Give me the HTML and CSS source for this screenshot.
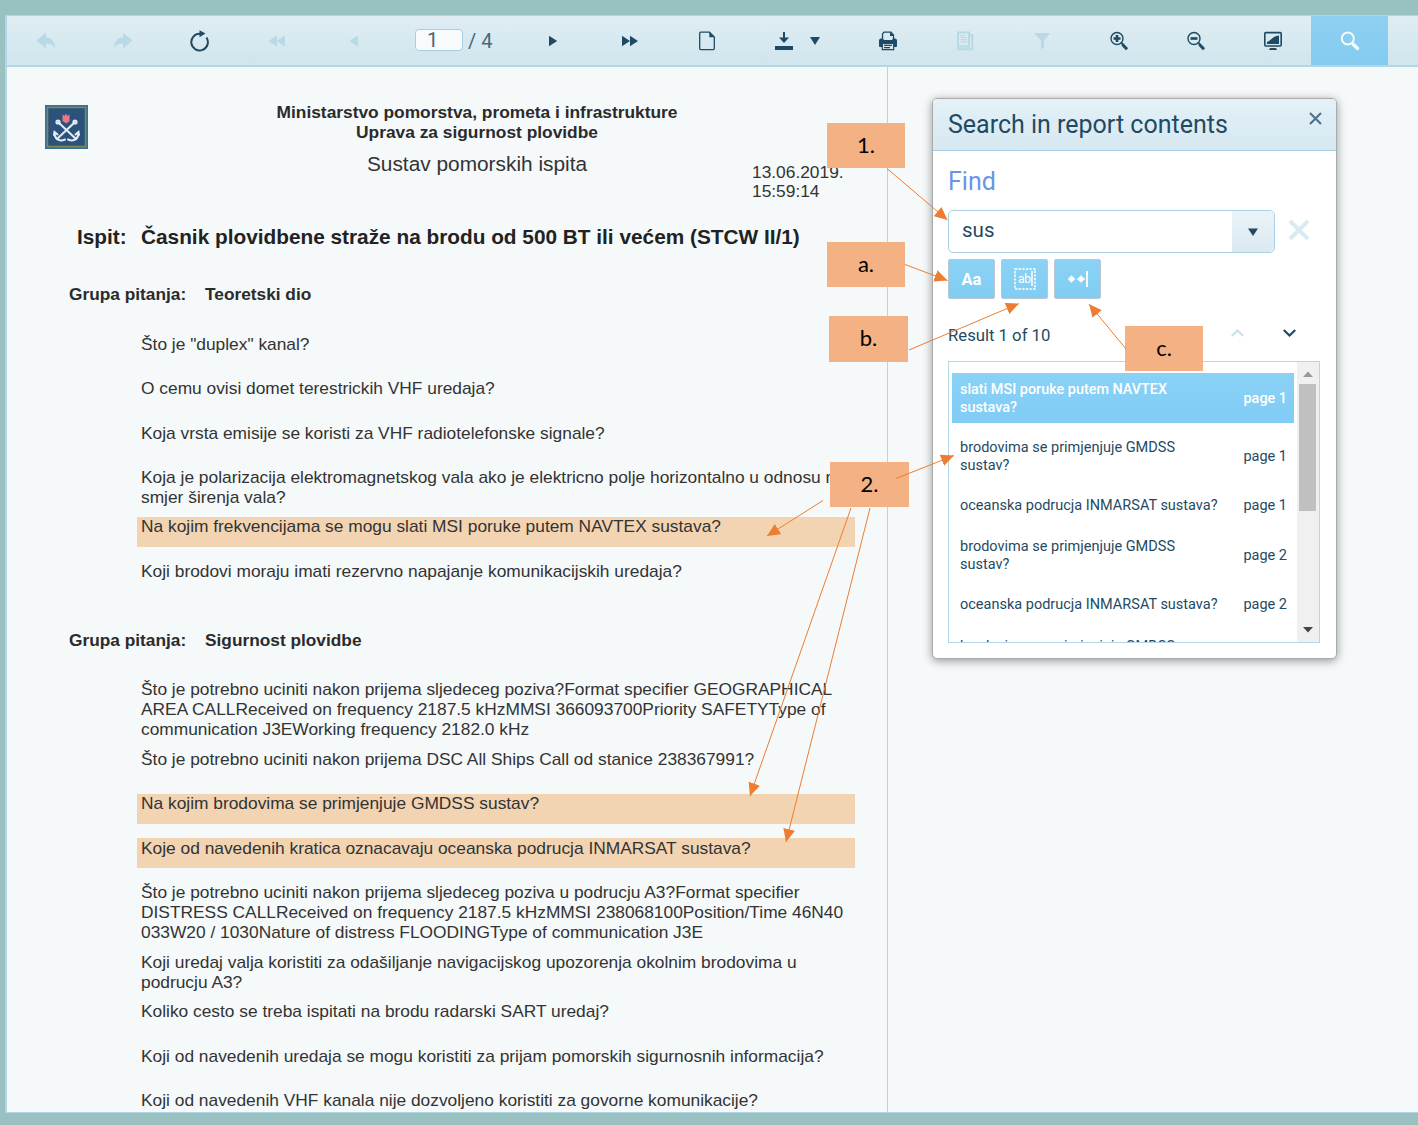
FILE: index.html
```html
<!DOCTYPE html>
<html lang="hr">
<head>
<meta charset="utf-8">
<title>Report viewer</title>
<link rel="stylesheet" href="styles.css">
</head>
<body>
<div class="viewer">
  <header class="toolbar">
    <span class="tool off"><svg width="20" height="18" viewBox="0 0 20 18"><path d="M.5 8.500 10 .5V5.300C15 5.500 18.500 9 19.300 16C17.500 13 14.500 11.500 10 11.700V16.500Z"/></svg></span>
    <span class="tool off"><svg width="20" height="18" viewBox="0 0 20 18"><path d="M19.500 8.500 10 .5V5.300C5 5.500 1.500 9 .7 16C2.500 13 5.500 11.500 10 11.700V16.500Z"/></svg></span>
    <span class="tool"><svg width="20" height="22" viewBox="0 0 20 22"><path class="line" stroke-width="2" d="M16.500 7.500A8.300 8.300 0 1 1 10 3.800"/><path d="M9.500 0.300 15.500 3.500 9.500 7.300Z"/></svg></span>
    <span class="tool off"><svg width="18" height="12" viewBox="0 0 18 12"><path d="M.5 6 9 .5V11.500ZM8.500 6 17 .5V11.500Z"/></svg></span>
    <span class="tool off"><svg width="10" height="12" viewBox="0 0 10 12"><path d="M.5 6 9 .5V11.500Z"/></svg></span>
    <span class="pager"><span class="page-input">1</span><span class="page-total">/ 4</span></span>
    <span class="tool"><svg width="10" height="12" viewBox="0 0 10 12"><path d="M9.200 6 1 .7V11.300Z"/></svg></span>
    <span class="tool"><svg width="18" height="12" viewBox="0 0 18 12"><path d="M9 6 1 .7V11.300ZM17 6 9 .7V11.300Z"/></svg></span>
    <span class="tool"><svg width="18" height="20" viewBox="0 0 18 20"><path class="line" stroke-width="1.300" d="M2.700 1.200H11.500L16.300 6V17.500Q16.300 18.600 15.300 18.600H2.700Q1.700 18.600 1.700 17.500V2.200Q1.700 1.200 2.700 1.200Z"/><path d="M11.300 1V6.200H16.500Z"/></svg></span>
    <span class="tool download"><svg width="20" height="20" viewBox="0 0 20 20"><path d="M9 1H11V6.500H15L10 12 5 6.500H9ZM1 15H19V19H1Z"/></svg><svg width="10" height="8" viewBox="0 0 10 8"><path d="M0 0H10L5 8Z"/></svg></span>
    <span class="tool"><svg width="20" height="20" viewBox="0 0 20 20"><path class="line" stroke-width="1.300" d="M4.500 8V3L6 1.200H13L15.500 4V8"/><path d="M12 1V5H16ZM3 7.500H5L6 9H14L15 7.500H17Q19 7.500 19 9.500V15Q19 16 18 16H2Q1 16 1 15V9.500Q1 7.500 3 7.500Z"/><path class="paper" d="M4.300 12.300H15.700V18.700H4.300Z"/><path class="line" stroke-width="1.200" d="M4.300 12.300H15.700V18.700H4.300ZM6 14.400H14M6 16.600H12"/></svg></span>
    <span class="tool off"><svg width="18" height="20" viewBox="0 0 18 20"><path class="line" stroke-width="2" d="M2 1.500H13V15.500H2ZM14 4H16.300V18.300H2V1.500"/><path class="line" stroke-width="1.100" d="M4.500 4.500H9M4.500 6.500H11M4.500 8.600H11M4.500 10.700H11"/></svg></span>
    <span class="tool off"><svg width="18" height="18" viewBox="0 0 18 18"><path d="M.8 1H17.200L11 8.500V15.500L8 17.500V8.500Z"/></svg></span>
    <span class="tool"><svg width="20" height="20" viewBox="0 0 20 20"><circle class="line" stroke-width="1.400" cx="8" cy="7.500" r="6"/><path class="line" stroke-width="2.600" d="M8 4V11M4.500 7.500H11.500"/><path class="line" stroke-width="2" d="M12 11.500 14 13.500"/><path class="line" stroke-width="3" d="M13.500 13.500 18 18.300"/></svg></span>
    <span class="tool"><svg width="20" height="20" viewBox="0 0 20 20"><circle class="line" stroke-width="1.400" cx="8" cy="7.500" r="6"/><path class="line" stroke-width="2.600" d="M4.500 7.500H11.500"/><path class="line" stroke-width="2" d="M12 11.500 14 13.500"/><path class="line" stroke-width="3" d="M13.500 13.500 18 18.300"/></svg></span>
    <span class="tool"><svg width="20" height="20" viewBox="0 0 20 20"><rect class="line" stroke-width="1.600" x="1.800" y="1.600" width="16.400" height="13.400" rx="1"/><path d="M4 13V11C7 10.500 9.500 5 16 4.500V13ZM7 17H13L14 19H6Z"/></svg></span>
    <span class="tool active"><svg width="20" height="20" viewBox="0 0 20 20"><circle class="line" stroke-width="1.800" cx="7.800" cy="7.500" r="6"/><path class="line" stroke-width="3.300" stroke-linecap="round" d="M13 13 17.500 17.500"/></svg></span>
  </header>

  <div class="workspace">
    <main class="report">
      <div class="report-head">
        <svg class="crest" width="43" height="44" viewBox="0 0 43 44"><rect width="43" height="44" fill="#37709a"/><rect x="2.500" y="2.500" width="38" height="39" fill="#2a527c" stroke="#83894a" stroke-width="1.500"/><path d="M17.500 9.500 19.500 11 21 8.500 22.500 11 24.500 9.500V16L21.500 18.500 17.500 16Z" fill="#e87886"/><g fill="none" stroke="#e3edf2" stroke-width="2" stroke-linecap="round"><path d="M13.500 17.500 31 34M29.500 17.500 12 34"/><circle cx="13" cy="17" r="1.600"/><circle cx="30" cy="17" r="1.600"/><path d="M9.500 28C9.500 34 14 37 20 34.500M33.500 28C33.500 34 29 37 23 34.500M9 30 9.500 27 12.500 29.500M34 30 33.500 27 30.500 29.500"/></g></svg>
        <div class="issuer">
          <b>Ministarstvo pomorstva, prometa i infrastrukture</b>
          <b>Uprava za sigurnost plovidbe</b>
          <span class="system">Sustav pomorskih ispita</span>
        </div>
        <div class="stamp">13.06.2019.<br>15:59:14</div>
      </div>
      <h1 class="exam"><span>Ispit:</span><span>Časnik plovidbene straže na brodu od 500 BT ili većem (STCW II/1)</span></h1>
      <section class="group first">
        <h2><span>Grupa pitanja:</span><span>Teoretski dio</span></h2>
        <p>Što je "duplex" kanal?</p>
        <p>O cemu ovisi domet terestrickih VHF uredaja?</p>
        <p>Koja vrsta emisije se koristi za VHF radiotelefonske signale?</p>
        <p class="two">Koja je polarizacija elektromagnetskog vala ako je elektricno polje horizontalno u odnosu na<br>smjer širenja vala?</p>
        <p class="hit">Na kojim frekvencijama se mogu slati MSI poruke putem NAVTEX sustava?</p>
        <p>Koji brodovi moraju imati rezervno napajanje komunikacijskih uredaja?</p>
      </section>
      <section class="group">
        <h2><span>Grupa pitanja:</span><span>Sigurnost plovidbe</span></h2>
        <p class="three">Što je potrebno uciniti nakon prijema sljedeceg poziva?Format specifier GEOGRAPHICAL<br>AREA CALLReceived on frequency 2187.5 kHzMMSI 366093700Priority SAFETYType of<br>communication J3EWorking frequency 2182.0 kHz</p>
        <p>Što je potrebno uciniti nakon prijema DSC All Ships Call od stanice 238367991?</p>
        <p class="hit">Na kojim brodovima se primjenjuje GMDSS sustav?</p>
        <p class="hit">Koje od navedenih kratica oznacavaju oceanska podrucja INMARSAT sustava?</p>
        <p class="three">Što je potrebno uciniti nakon prijema sljedeceg poziva u podrucju A3?Format specifier<br>DISTRESS CALLReceived on frequency 2187.5 kHzMMSI 238068100Position/Time 46N40<br>033W20 / 1030Nature of distress FLOODINGType of communication J3E</p>
        <p class="two">Koji uredaj valja koristiti za odašiljanje navigacijskog upozorenja okolnim brodovima u<br>podrucju A3?</p>
        <p>Koliko cesto se treba ispitati na brodu radarski SART uredaj?</p>
        <p>Koji od navedenih uredaja se mogu koristiti za prijam pomorskih sigurnosnih informacija?</p>
        <p>Koji od navedenih VHF kanala nije dozvoljeno koristiti za govorne komunikacije?</p>
      </section>
    </main>

    <aside class="search">
      <header class="search-head"><span>Search in report contents</span><svg width="13" height="13" viewBox="0 0 13 13"><path class="line" stroke-width="2.200" d="M1 1 12 12M12 1 1 12"/></svg></header>
      <div class="search-body">
        <div class="find">Find</div>
        <div class="field-row">
          <div class="combo"><span>sus</span><i><svg width="10" height="8" viewBox="0 0 10 8"><path d="M0 .5H10L5 8Z"/></svg></i></div>
          <svg class="clear" width="22" height="22" viewBox="0 0 22 22"><path class="line" stroke-width="4" d="M2 2 20 20M20 2 2 20"/></svg>
        </div>
        <div class="options">
          <span class="opt">Aa</span>
          <span class="opt"><svg width="22" height="22" viewBox="0 0 22 22"><path class="line" stroke-width="1.500" stroke-dasharray="2.400 1.200" d="M1 1H21V21H1Z"/><path class="line" stroke-width="1.500" d="M18 3V18"/><text x="4" y="15" font-size="12" textLength="13">ab</text></svg></span>
          <span class="opt"><svg width="22" height="18" viewBox="0 0 22 18"><path class="line" stroke-width="1.800" d="M20 1V17"/><path class="line" stroke-width="1.500" d="M1 9H8M4.500 5.500V12.500M2.500 7 6.500 11M6.500 7 2.500 11M10 9H18M14 5.500V12.500M12 7 16 11M16 7 12 11"/></svg></span>
        </div>
        <div class="status"><span>Result 1 of 10</span><svg class="up" width="13" height="8" viewBox="0 0 13 8"><path class="line" stroke-width="2" d="M.8 7 6.500 1.500 12.200 7"/></svg><svg width="13" height="8" viewBox="0 0 13 8"><path class="line" stroke-width="2.200" d="M.8 1 6.500 6.500 12.200 1"/></svg></div>
        <div class="results">
          <div class="list">
            <div class="row tall selected"><span>slati MSI poruke putem NAVTEX<br>sustava?</span><em>page 1</em></div>
            <div class="row tall"><span>brodovima se primjenjuje GMDSS<br>sustav?</span><em>page 1</em></div>
            <div class="row"><span>oceanska podrucja INMARSAT sustava?</span><em>page 1</em></div>
            <div class="row tall"><span>brodovima se primjenjuje GMDSS<br>sustav?</span><em>page 2</em></div>
            <div class="row"><span>oceanska podrucja INMARSAT sustava?</span><em>page 2</em></div>
            <div class="row tall"><span>brodovima se primjenjuje GMDSS</span></div>
          </div>
          <div class="scrollbar"><svg class="arrow-up" width="10" height="6" viewBox="0 0 10 6"><path d="M0 6 5 .5 10 6Z"/></svg><div class="thumb"></div><svg class="arrow-down" width="10" height="6" viewBox="0 0 10 6"><path d="M0 0 5 5.500 10 0Z"/></svg></div>
        </div>
      </div>
    </aside>
  </div>
</div>

<div class="note n1">1.</div>
<div class="note na">a.</div>
<div class="note nb">b.</div>
<div class="note nc">c.</div>
<div class="note n2">2.</div>
<svg class="arrows" width="1418" height="1125" viewBox="0 0 1418 1125">
  <defs><marker id="head" markerUnits="userSpaceOnUse" markerWidth="14" markerHeight="12" refX="13" refY="6" orient="auto"><path d="M0 0 13 6 0 12Z"/></marker></defs>
  <path d="M887 168.500 947.500 220"/>
  <path d="M905 264.500 947.500 280.500"/>
  <path d="M909 350 1019 303.500"/>
  <path d="M1126 349 1089 304"/>
  <path d="M823 500.500 767 536"/>
  <path d="M896 478.500 954 455.500"/>
  <path d="M851 508 750 796"/>
  <path d="M870 508 786 842"/>
</svg>
</body>
</html>
```
FILE: styles.css
```css
* { box-sizing: border-box; }
body {
  position: relative;
  width: 1418px;
  height: 1125px;
  margin: 0;
  padding: 15px 0 12px 5px;
  overflow: hidden;
  background: #9ac1c1;
  font-family: Roboto, sans-serif;
  color: #1f4a63;
}
svg { display: block; flex: none; fill: currentColor; }
.line { fill: none; stroke: currentColor; }

.viewer {
  display: flex;
  flex-direction: column;
  height: 1098px;
  background: #f5f9fa;
  border: solid #b3d6e6;
  border-width: 1px 0 1px 2px;
}
.toolbar {
  display: flex;
  flex: none;
  height: 51px;
  background: linear-gradient(#dfedf3, #d0e5ee);
  border-bottom: 2px solid #b5d6e5;
}
.tool {
  display: flex;
  align-items: center;
  justify-content: center;
  width: 77px;
  height: 50px;
}
.off { color: #b8dae6; }
.paper { fill: #d7e8f0; }
.active {
  height: 49px;
  padding-top: 1px;
  background: linear-gradient(#8fd0f2, #82ccf0);
  color: #f8fcfe;
}
.download { width: 104px; gap: 16px; }
.pager {
  display: flex;
  align-items: center;
  width: 122px;
  height: 50px;
  padding: 0 0 2px 23px;
  gap: 5px;
  font-size: 20px;
  color: #45697e;
}
.page-input {
  width: 48px;
  height: 22px;
  padding-left: 11px;
  background: #f8fbfc;
  border: 1px solid #a5cfe2;
  border-radius: 4px;
  line-height: 21px;
}
.page-total { padding-top: 1px; }

.workspace { display: flex; flex: 1; min-height: 0; align-items: flex-start; }
.report {
  flex: none;
  width: 881px;
  height: 100%;
  overflow: hidden;
  border-right: 1px solid #b3d6e3;
  font-family: "Liberation Sans", Arial, sans-serif;
  font-size: 17.350px;
  line-height: 19.800px;
  color: #333;
  white-space: nowrap;
}
.report-head { display: flex; height: 146px; }
.crest { margin: 38px 0 0 38px; }
.issuer {
  display: flex;
  flex-direction: column;
  align-items: center;
  width: 780px;
  margin: 36px -204px 0 -1px;
  color: #2b2b2b;
}
.system { margin-top: 9px; font-size: 20.850px; line-height: 23px; color: #333; }
.stamp { margin-top: 95.500px; margin-left: 89px; }
.exam {
  display: grid;
  grid-template-columns: 64px auto;
  height: 55px;
  margin: 0;
  padding: 12px 0 0 70px;
  font-size: 20.800px;
  line-height: 24px;
  color: #222;
}
.group h2 {
  display: grid;
  grid-template-columns: 136px auto;
  height: 50.800px;
  margin: 0;
  padding: 1px 0 0 62px;
  font-size: 17.300px;
  line-height: 20px;
  color: #2b2b2b;
}
.group.first h2 { padding-top: 0; }
.group.first { height: 361.300px; padding-top: 16px; }
.group p { height: 29.500px; margin: 0 32px 14.800px 130px; padding: .2px 0 0 4px; }
.group p.two { height: 49.500px; margin-bottom: 0; }
.group p.three { height: 69.800px; margin-bottom: 0; }
.group p.hit { background: #f2d4b2; }

.search {
  width: 405px;
  height: 561px;
  margin: 31px 0 0 44px;
  background: #fff;
  border: 1px solid #aaa;
  border-radius: 5px;
  box-shadow: 0 2px 10px rgba(0, 0, 0, .4);
}
.search-head {
  display: flex;
  justify-content: space-between;
  height: 52px;
  padding: 0 14px 0 15px;
  background: linear-gradient(#e4f1f8, #d6e8f1);
  border-bottom: 1px solid #a4cfe2;
  border-radius: 4px 4px 0 0;
  font-size: 25px;
  line-height: 51px;
}
.search-head svg { margin-top: 13px; color: #527388; }
.search-body { padding: 16px 16px 0 15px; }
.find { height: 43px; font-size: 25px; line-height: 29px; color: #6a93ec; }
.field-row { display: flex; align-items: center; gap: 13px; }
.combo {
  display: flex;
  justify-content: space-between;
  width: 327px;
  height: 43px;
  border: 1px solid #a8d1e5;
  border-radius: 5px;
  padding-left: 13px;
  overflow: hidden;
  font-size: 20.500px;
  line-height: 39px;
}
.combo i {
  display: flex;
  align-items: center;
  justify-content: center;
  width: 42px;
  background: linear-gradient(#eaf3f8, #dbe9f1);
}
.clear { color: #d9ebf2; margin-top: -4px; }
.options { display: flex; gap: 6.500px; margin-top: 6px; }
.opt {
  display: flex;
  align-items: center;
  justify-content: center;
  width: 46.700px;
  height: 40px;
  background: linear-gradient(#8bd2f5, #80cdf3);
  border: 1px solid #b9c8d0;
  border-radius: 2px;
  font-size: 16.500px;
  font-weight: 700;
  color: #fff;
}
.opt text { font-weight: 400; }
.status { display: flex; align-items: center; height: 72px; font-size: 16.700px; }
.up { margin: 0 39px 0 auto; color: #c9e0eb; }
.status svg:last-child { margin-right: 24px; }
.status svg { margin-top: -4px; }
.results {
  display: flex;
  justify-content: space-between;
  width: 372px;
  height: 282px;
  margin-top: -10px;
  overflow: hidden;
  border: 1px solid #b5d8e8;
  font-size: 14.500px;
  line-height: 18px;
  white-space: nowrap;
}
.list { width: 342px; margin: 11px 0 0 3px; }
.row {
  display: flex;
  align-items: center;
  justify-content: space-between;
  height: 31px;
  margin-bottom: 8.700px;
  padding: 0 7px 0 8px;
}
.row.tall { height: 50px; }
.row.tall:last-child { align-items: flex-start; padding-top: 9px; }
.row em { font-style: normal; }
.row.selected {
  padding-top: 2px;
  margin-bottom: 9.200px;
  background: linear-gradient(#8bd1f5, #7fccf5);
  color: #fff;
  font-weight: 500;
  font-size: 14.400px;
}
.scrollbar { width: 22px; background: #f0f0f0; }
.arrow-up { margin: 9px 0 7px 6px; color: #999; }
.thumb { width: 17px; height: 127px; margin-left: 2px; background: #c0c0c0; }
.arrow-down { margin: 116px 0 0 6px; color: #444; }

.arrows { position: absolute; left: 0; top: 0; fill: #ed7d31; }
.arrows > path { fill: none; stroke: #ed7d31; stroke-width: 1; marker-end: url(#head); }
.note {
  position: absolute;
  width: 78px;
  height: 45px;
  background: #f4b183;
  color: #000;
  font-family: Lato, sans-serif;
  font-size: 22px;
  line-height: 44px;
  text-align: center;
}
.n1 { left: 827px; top: 123px; }
.na { left: 827px; top: 242px; }
.nb { left: 829px; top: 316px; width: 79px; height: 46px; }
.nc { left: 1125px; top: 326px; }
.n2 { left: 830px; top: 462px; width: 79px; }
```
